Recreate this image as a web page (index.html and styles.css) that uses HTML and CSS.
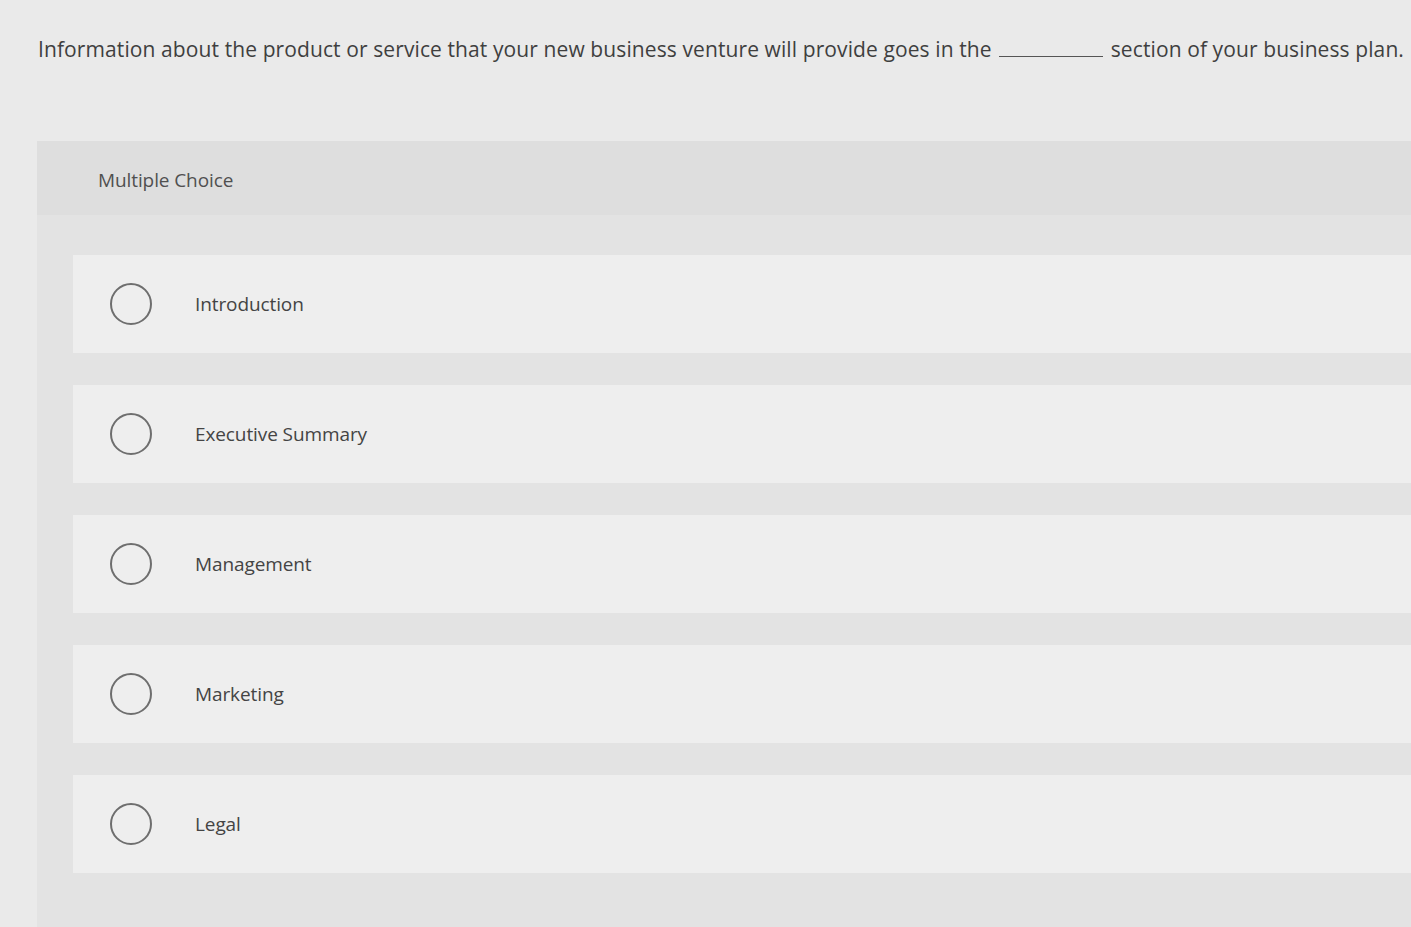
FILE: index.html
```html
<!DOCTYPE html>
<html lang="en">
<head>
<meta charset="utf-8">
<title>Multiple Choice</title>
<link rel="stylesheet" href="styles.css">
</head>
<body>
<main class="page">
  <p class="question">Information about the product or service that your new business venture will provide goes in the <span class="blank"></span> section of your business plan.</p>
  <section class="card">
    <header class="card-head">Multiple Choice</header>
    <ul class="options">
      <li class="option"><span class="radio"></span><span class="label">Introduction</span></li>
      <li class="option"><span class="radio"></span><span class="label">Executive Summary</span></li>
      <li class="option"><span class="radio"></span><span class="label">Management</span></li>
      <li class="option"><span class="radio"></span><span class="label">Marketing</span></li>
      <li class="option"><span class="radio"></span><span class="label">Legal</span></li>
    </ul>
  </section>
</main>
</body>
</html>
```

FILE: styles.css
```css
html, body {
  margin: 0;
  padding: 0;
  height: 100%;
  overflow: hidden;
}
body {
  background: #eaeaea;
  font-family: "Open Sans", Lato, "Liberation Sans", sans-serif;
  color: #4a4a4a;
}
.page {
  display: flex;
  flex-direction: column;
  height: 100%;
}
.question {
  margin: 0;
  padding: 35px 0 0 38px;
  font-size: 21px;
  font-weight: 500;
  line-height: 28px;
  color: #3f3f3f;
  white-space: nowrap;
  letter-spacing: 0.1px;
}
.blank {
  display: inline-block;
  width: 104px;
  border-bottom: 1.5px solid #555;
  margin: 0 2px;
}
.card {
  margin: 78px 0 0 37px;
  flex: 1;
  background: #e3e3e3;
  display: flex;
  flex-direction: column;
}
.card-head {
  height: 74px;
  display: flex;
  align-items: center;
  padding-left: 61px;
  padding-top: 3px;
  box-sizing: border-box;
  background: #dedede;
  font-size: 19px;
  font-weight: 500;
  color: #505050;
  letter-spacing: -0.1px;
}
.options {
  list-style: none;
  margin: 0;
  padding: 40px 0 0 36px;
  display: flex;
  flex-direction: column;
  gap: 32px;
}
.option {
  height: 98px;
  background: #eeeeee;
  display: flex;
  align-items: center;
  padding-left: 37px;
  gap: 43px;
}
.radio {
  width: 38px;
  height: 38px;
  border: 2.5px solid #6e6e6e;
  border-radius: 50%;
  flex: none;
}
.label {
  font-size: 19px;
  font-weight: 500;
  color: #444;
  letter-spacing: -0.1px;
}
```
